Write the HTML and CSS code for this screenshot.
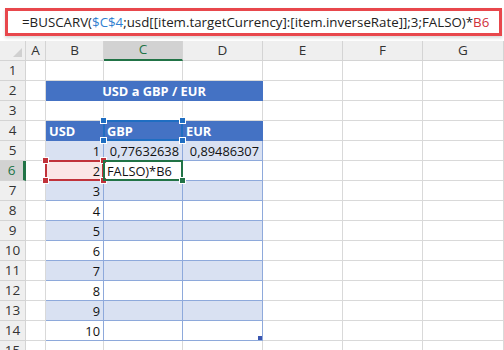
FILE: index.html
```html
<!DOCTYPE html>
<html lang="es">

<head>
    <meta charset="UTF-8">
    <title>BUSCARV</title>
    <link rel="stylesheet" href="styles.css">
</head>

<body>
    <div class="formula-area">
        <div class="formula-box">=BUSCARV(<span class="ref-blue">$C$4</span>;usd[[item.targetCurrency]:[item.inverseRate]];3;FALSO)*<span class="ref-red">B6</span></div>
    </div>

    <div class="sheet">
        <!-- column headers -->
        <div class="hdr corner"><span class="corner-tri"></span></div>
        <div class="hdr col">A</div>
        <div class="hdr col">B</div>
        <div class="hdr col active-col">C</div>
        <div class="hdr col">D</div>
        <div class="hdr col">E</div>
        <div class="hdr col">F</div>
        <div class="hdr col">G</div>

        <!-- row 1 -->
        <div class="hdr row">1</div>
        <div class="cell"></div><div class="cell"></div><div class="cell"></div><div class="cell"></div><div class="cell"></div><div class="cell"></div><div class="cell"></div>

        <!-- row 2 -->
        <div class="hdr row">2</div>
        <div class="cell"></div>
        <div class="cell title">USD a GBP / EUR</div>
        <div class="cell"></div><div class="cell"></div><div class="cell"></div>

        <!-- row 3 -->
        <div class="hdr row">3</div>
        <div class="cell"></div><div class="cell"></div><div class="cell"></div><div class="cell"></div><div class="cell"></div><div class="cell"></div><div class="cell"></div>

        <!-- row 4 -->
        <div class="hdr row">4</div>
        <div class="cell"></div>
        <div class="cell th">USD</div>
        <div class="cell th">GBP
            <span class="sel sel-blue">
                <i class="h tl"></i><i class="h tr"></i><i class="h bl"></i><i class="h br"></i>
            </span>
        </div>
        <div class="cell th">EUR</div>
        <div class="cell"></div><div class="cell"></div><div class="cell"></div>

        <!-- row 5 -->
        <div class="hdr row">5</div>
        <div class="cell"></div>
        <div class="cell td band num">1</div>
        <div class="cell td band num">0,77632638</div>
        <div class="cell td band num">0,89486307</div>
        <div class="cell"></div><div class="cell"></div><div class="cell"></div>

        <!-- row 6 -->
        <div class="hdr row active-row">6</div>
        <div class="cell"></div>
        <div class="cell td num pink">2
            <span class="sel sel-red">
                <i class="h tl"></i><i class="h tr"></i><i class="h bl"></i><i class="h br"></i>
            </span>
        </div>
        <div class="cell td edit">FALSO)*B6
            <span class="sel sel-green"><i class="h br"></i></span>
        </div>
        <div class="cell td"></div>
        <div class="cell"></div><div class="cell"></div><div class="cell"></div>

        <div class="hdr row">7</div>
        <div class="cell"></div>
        <div class="cell td band num">3</div><div class="cell td band"></div><div class="cell td band"></div>
        <div class="cell"></div><div class="cell"></div><div class="cell"></div>

        <div class="hdr row">8</div>
        <div class="cell"></div>
        <div class="cell td num">4</div><div class="cell td"></div><div class="cell td"></div>
        <div class="cell"></div><div class="cell"></div><div class="cell"></div>

        <div class="hdr row">9</div>
        <div class="cell"></div>
        <div class="cell td band num">5</div><div class="cell td band"></div><div class="cell td band"></div>
        <div class="cell"></div><div class="cell"></div><div class="cell"></div>

        <div class="hdr row">10</div>
        <div class="cell"></div>
        <div class="cell td num">6</div><div class="cell td"></div><div class="cell td"></div>
        <div class="cell"></div><div class="cell"></div><div class="cell"></div>

        <div class="hdr row">11</div>
        <div class="cell"></div>
        <div class="cell td band num">7</div><div class="cell td band"></div><div class="cell td band"></div>
        <div class="cell"></div><div class="cell"></div><div class="cell"></div>

        <div class="hdr row">12</div>
        <div class="cell"></div>
        <div class="cell td num">8</div><div class="cell td"></div><div class="cell td"></div>
        <div class="cell"></div><div class="cell"></div><div class="cell"></div>

        <div class="hdr row">13</div>
        <div class="cell"></div>
        <div class="cell td band num">9</div><div class="cell td band"></div><div class="cell td band"></div>
        <div class="cell"></div><div class="cell"></div><div class="cell"></div>

        <div class="hdr row">14</div>
        <div class="cell"></div>
        <div class="cell td num">10</div><div class="cell td"></div>
        <div class="cell td"><span class="resize"></span></div>
        <div class="cell"></div><div class="cell"></div><div class="cell"></div>

        <div class="hdr row">15</div>
        <div class="cell"></div><div class="cell"></div><div class="cell"></div><div class="cell"></div><div class="cell"></div><div class="cell"></div><div class="cell"></div>
    </div>
</body>

</html>
```

FILE: styles.css
```css
body {
    margin: 0;
    background: #fff;
    font-family: "Open Sans", "Liberation Sans", sans-serif;
    overflow: hidden;
}

.formula-area {
    height: 41px;
    padding: 8px 2px 0 5px;
    box-sizing: border-box;
}

.formula-box {
    height: 28px;
    box-sizing: border-box;
    border: 3px solid #e8474c;
    padding: 0 0 0 14px;
    font-size: 13.3px;
    line-height: 23px;
    color: #222;
    white-space: nowrap;
    box-shadow: 0 2px 3px rgba(0, 0, 0, 0.15);
}

.ref-blue {
    color: #2f7fd0;
}

.ref-red {
    color: #d0303a;
}

.sheet {
    display: grid;
    grid-template-columns: 26px 20px 58px 79px 80px 80px 80px 81px;
    grid-auto-rows: 20px;
    font-size: 12.8px;
    color: #111;
}

.hdr {
    background: #efefef;
    border-right: 1px solid #d4d4d4;
    border-bottom: 1px solid #d4d4d4;
    box-sizing: border-box;
    color: #333;
    font-size: 13.5px;
    display: flex;
    align-items: center;
    justify-content: center;
    line-height: 1;
}

.corner {
    position: relative;
}

.corner-tri {
    position: absolute;
    right: 3px;
    bottom: 3px;
    border-left: 9px solid transparent;
    border-bottom: 9px solid #d0d0d0;
}

.active-col {
    background: #d2d2d2;
    color: #217346;
    border-bottom: 2px solid #217346;
}

.active-row {
    background: #d2d2d2;
    color: #217346;
    border-right: 3px solid #217346;
}

.cell {
    position: relative;
    border-right: 1px solid #d9d9d9;
    border-bottom: 1px solid #d9d9d9;
    box-sizing: border-box;
    padding: 1px 3px 0;
    line-height: 19px;
    white-space: nowrap;
}

.title {
    grid-column: span 3;
    background: #4472c4;
    color: #fff;
    font-weight: bold;
    text-align: center;
    border-color: #4472c4;
}

.th {
    background: #4472c4;
    color: #fff;
    font-weight: bold;
    border-right-color: #4472c4;
    border-bottom-color: #4472c4;
}

.td {
    border-right-color: #8ea9db;
    border-bottom-color: #8ea9db;
}

.band {
    background: #d9e1f2;
}

.num {
    text-align: right;
}

.pink {
    background: #fbe6e6;
}

.sel {
    position: absolute;
    left: -1px;
    top: -1px;
    right: -1px;
    bottom: -1px;
    border: 2px solid;
    z-index: 2;
}

.sel-blue {
    border-color: #1f6ec2;
}

.sel-red {
    border-color: #c1323a;
}

.sel-green {
    border-color: #217346;
}

.h {
    position: absolute;
    width: 5px;
    height: 5px;
    border: 1px solid #fff;
}

.sel-blue .h {
    background: #1f6ec2;
}

.sel-red .h {
    background: #c1323a;
}

.sel-green .h {
    background: #217346;
}

.tl {
    left: -5px;
    top: -5px;
}

.tr {
    right: -5px;
    top: -5px;
}

.bl {
    left: -5px;
    bottom: -5px;
}

.br {
    right: -5px;
    bottom: -5px;
}

.resize {
    position: absolute;
    right: 0;
    bottom: 0;
    width: 4px;
    height: 4px;
    background: #3a56b0;
}
```
